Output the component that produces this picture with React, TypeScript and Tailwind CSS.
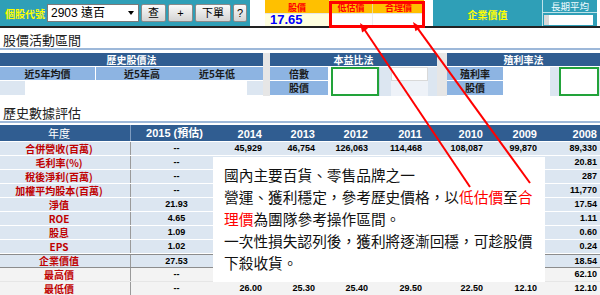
import React from 'react';

const years = ['2014', '2013', '2012', '2011', '2010', '2009', '2008'];
const colW = ['w-[53px]', 'w-[53px]', 'w-[53px]', 'w-[54px]', 'w-[61px]', 'w-[54px]', 'w-[60px]'];

type Row = { label: string; v15: string; vals: string[]; kind?: 'sep' | 'grey' };

const rows: Row[] = [
  { label: '合併營收(百萬)', v15: '--', vals: ['45,929', '46,754', '126,063', '114,468', '108,087', '99,870', '89,330'] },
  { label: '毛利率(%)', v15: '--', vals: ['', '', '', '', '', '', '20.81'] },
  { label: '稅後淨利(百萬)', v15: '--', vals: ['', '', '', '', '', '', '287'] },
  { label: '加權平均股本(百萬)', v15: '--', vals: ['', '', '', '', '', '', '11,770'] },
  { label: '淨值', v15: '21.93', vals: ['', '', '', '', '', '', '17.54'] },
  { label: 'ROE', v15: '4.65', vals: ['', '', '', '', '', '', '1.11'] },
  { label: '股息', v15: '1.09', vals: ['', '', '', '', '', '', '0.60'] },
  { label: 'EPS', v15: '1.02', vals: ['', '', '', '', '', '', '0.24'] },
  { label: '企業價值', v15: '27.53', vals: ['', '', '', '', '', '', '18.54'], kind: 'sep' },
  { label: '最高價', v15: '--', vals: ['', '', '', '', '', '', '62.10'], kind: 'grey' },
  { label: '最低價', v15: '--', vals: ['26.00', '25.30', '25.40', '29.50', '22.50', '12.10', '12.10'], kind: 'grey' },
];

function Arrow({ x0, y0, x1, y1 }: { x0: number; y0: number; x1: number; y1: number }) {
  const dx = x0 - x1;
  const dy = y0 - y1;
  const L = Math.hypot(dx, dy);
  const ux = dx / L;
  const uy = dy / L;
  const bx = x0 - 9 * ux;
  const by = y0 - 9 * uy;
  const nx = -uy;
  const ny = ux;
  const pts = `${x0},${y0} ${bx + 3.5 * nx},${by + 3.5 * ny} ${bx - 3.5 * nx},${by - 3.5 * ny}`;
  return (
    <g>
      <line x1={bx + 2 * ux} y1={by + 2 * uy} x2={x1} y2={y1} stroke="#ff0000" strokeWidth={2} />
      <polygon points={pts} fill="#ff0000" />
    </g>
  );
}

function Btn({ children, w }: { children: React.ReactNode; w: string }) {
  return (
    <div
      className={`${w} h-[18px] ml-[2px] flex items-center justify-center rounded-[2px] border border-[#8a8a8a] bg-gradient-to-b from-[#fafafa] to-[#d4d4d4] text-[11px] leading-none text-black`}
    >
      {children}
    </div>
  );
}

export default function App() {
  return (
    <div className="relative w-[600px] h-[295px] overflow-hidden bg-white font-['Liberation_Sans','Noto_Sans_CJK_TC',sans-serif]">
      {/* Top bar */}
      <div className="flex h-[28px] border-b-2 border-[#222]">
        <div className="w-[250px] bg-[#2f9fb7] flex items-center">
          <span className="ml-[5px] text-[10px] font-bold text-[#ffff00] font-['Noto_Sans_CJK_TC',sans-serif] whitespace-nowrap">
            個股代號
          </span>
          <div className="ml-[2px] w-[92px] h-[18px] bg-white border border-[#7a7a7a] flex items-center">
            <span className="flex-1 pl-[3px] text-[12px] leading-none text-black font-['Liberation_Sans','Noto_Sans_CJK_TC',sans-serif] whitespace-nowrap">
              2903 遠百
            </span>
            <div className="w-[14px] h-full flex items-center justify-center">
              <div className="w-0 h-0 border-l-[3px] border-r-[3px] border-t-[4px] border-l-transparent border-r-transparent border-t-black" />
            </div>
          </div>
          <Btn w="w-[25px]">查</Btn>
          <Btn w="w-[25px]">+</Btn>
          <Btn w="w-[36px]">下單</Btn>
          <Btn w="w-[14px]">?</Btn>
        </div>
        <div className="w-[15px]" />
        <div className="w-[159px] flex flex-col">
          <div className="h-[13px] flex bg-[#ffc000] text-[9px] font-bold text-[#ff0000] leading-[10px] font-['Noto_Sans_CJK_TC',sans-serif]">
            <div className="w-[65px] flex items-center justify-center pt-[2px] border-r border-[#e8d9a0]">股價</div>
            <div className="w-[43px] flex items-center justify-center pt-[2px] border-r border-[#e8d9a0]">低估價</div>
            <div className="flex-1 flex items-center justify-center pt-[2px]">合理價</div>
          </div>
          <div className="flex-1 flex border-t border-[#e6e6e6]">
            <div className="w-[65px] bg-[#ffffe0] flex items-center pl-[5px] text-[13px] font-bold text-[#0000ff] leading-[12px] border-r border-[#dddddd]">
              17.65
            </div>
            <div className="w-[43px] bg-white border-r border-[#eeeeee]" />
            <div className="flex-1 bg-white" />
          </div>
        </div>
        <div className="w-[9px]" />
        <div className="w-[109px] bg-[#2f9fb7] flex items-center justify-center pt-[3px]">
          <span className="text-[10px] font-bold text-[#ffff00] font-['Noto_Sans_CJK_TC',sans-serif]">企業價值</span>
        </div>
        <div className="w-[55px] bg-[#2f9fb7] flex flex-col border-l border-[#bfe3ea]">
          <div className="h-[13px] flex items-center justify-center border-b border-[#bfe3ea] text-[9.5px] leading-[11px] text-[#f0fbff] font-['Noto_Sans_CJK_TC',sans-serif]">
            長期平均
          </div>
          <div className="flex-1 flex items-center pl-[1px] pr-[4px]">
            <div className="w-full h-[10px] bg-white border-l-[5px] border-[#d9d9d9]" />
          </div>
        </div>
        <div className="flex-1" />
      </div>

      {/* 股價活動區間 */}
      <div className="h-[20px] pt-[3px] pl-[3px] text-[13px] leading-[17px] text-[#222] font-['Noto_Sans_CJK_TC',sans-serif]">
        股價活動區間
      </div>
      <div className="h-[2px] bg-[#9db8d9]" />
      <div className="mt-[3px] h-[43px] flex text-[10px] font-bold leading-none font-['Noto_Sans_CJK_TC',sans-serif]">
        <div className="w-[263px] flex flex-col">
          <div className="h-[14px] bg-[#305d91] border-b border-white text-white flex items-center justify-center">歷史股價法</div>
          <div className="h-[14px] bg-[#8db4e2] border-b border-white flex items-center text-[#1a1a1a]">
            <div className="w-[96px] h-full flex items-center justify-center border-r border-white">近5年均價</div>
            <div className="w-[92px] flex items-center justify-center">近5年高</div>
            <div className="w-[58px] flex items-center justify-center">近5年低</div>
            <div className="flex-1" />
          </div>
          <div className="h-[14px] flex">
            <div className="w-[25px] bg-[#dce6f1]" />
            <div className="w-[222px] bg-white" />
            <div className="flex-1 bg-[#dce6f1]" />
          </div>
        </div>
        <div className="w-[7px] bg-[#e6e6e6]" />
        <div className="w-[167px] flex flex-col">
          <div className="h-[14px] bg-[#305d91] border-b border-white text-white flex items-center justify-center">本益比法</div>
          <div className="flex-1 flex">
            <div className="w-[58px] flex flex-col text-[#1a1a1a]">
              <div className="h-[14px] bg-[#8db4e2] border-b border-white flex items-center justify-center">倍數</div>
              <div className="h-[14px] bg-[#8db4e2] flex items-center justify-center">股價</div>
            </div>
            <div className="w-[3px]" />
            <div className="w-[48px] h-[29px] border-2 border-[#22a33a] bg-white" />
            <div className="w-[12px] bg-[#dce6f1] border-l border-[#c4d3e6]" />
            <div className="w-[37px] flex flex-col">
              <div className="h-[14px] bg-white border border-[#d9d9d9]" />
              <div className="flex-1 bg-[#eef2f8]" />
            </div>
            <div className="flex-1 bg-[#dce6f1]" />
          </div>
        </div>
        <div className="w-[10px] bg-[#e6e6e6]" />
        <div className="w-[153px] flex flex-col">
          <div className="h-[14px] bg-[#305d91] border-b border-white text-white flex items-center justify-center">殖利率法</div>
          <div className="flex-1 flex">
            <div className="w-[56px] flex flex-col text-[#1a1a1a]">
              <div className="h-[14px] bg-[#8db4e2] border-b border-white flex items-center justify-center">殖利率</div>
              <div className="h-[14px] bg-[#8db4e2] flex items-center justify-center">股價</div>
            </div>
            <div className="w-[47px] bg-white" />
            <div className="w-[9px] bg-[#dce6f1]" />
            <div className="w-[40px] h-[29px] border-2 border-[#22a33a] bg-white" />
            <div className="flex-1 bg-[#dce6f1]" />
          </div>
        </div>
      </div>

      {/* 歷史數據評估 */}
      <div className="h-[25px] pt-[9px] pl-[3px] text-[13px] leading-[16px] text-[#222] font-['Noto_Sans_CJK_TC',sans-serif]">
        歷史數據評估
      </div>
      <div className="h-[2px] bg-[#9db8d9]" />
      <div className="mt-[2px] h-[17px] flex bg-[#305d91] border-b border-white text-white text-[11px] font-bold leading-none">
        <div className="w-[131px] flex items-center justify-center pr-[12px] border-r border-[#7f9cc0] font-normal font-['Noto_Sans_CJK_TC',sans-serif]">
          年度
        </div>
        <div className="w-[81px] flex items-center justify-center pl-[6px] whitespace-nowrap font-['Liberation_Sans','Noto_Sans_CJK_TC',sans-serif]">
          2015 (預估)
        </div>
        {years.map((y, i) => (
          <div key={y} className={`${colW[i]} flex items-center justify-end pr-[3px] pt-[2px]`}>
            {y}
          </div>
        ))}
      </div>
      {rows.map((r) => (
        <div
          key={r.label}
          className={`h-[14px] flex border-b ${
            r.kind === 'grey' ? 'bg-[#f3f3f3] border-[#e6e6e6]' : 'bg-[#dce6f1] border-white'
          } ${r.kind === 'sep' ? 'border-t border-t-[#8c8c8c] border-b-[#8c8c8c]' : ''}`}
        >
          <div className="w-[131px] flex items-center justify-center pr-[12px] border-r border-[#9a9a9a] text-[10px] font-bold text-[#c00000] leading-none whitespace-nowrap font-['Noto_Sans_CJK_TC',sans-serif]">
            {r.label}
          </div>
          <div className="w-[81px] flex items-center justify-center pl-[10px] text-[9px] font-bold text-black leading-none">
            {r.v15}
          </div>
          {r.vals.map((v, i) => (
            <div key={i} className={`${colW[i]} flex items-center justify-end pr-[3px] text-[9px] font-bold text-black leading-none`}>
              {v}
            </div>
          ))}
        </div>
      ))}

      {/* Red box over 低估價/合理價 */}
      <div className="absolute left-[329px] top-[1px] w-[96px] h-[27px] border-[3px] border-[#ff0000]" />

      {/* Callout */}
      <div className="absolute left-[213px] top-[157px] w-[332px] h-[125px] bg-white pt-[7px] pl-[11px] text-[14.7px] leading-[22px] text-[#111] font-['Noto_Sans_CJK_TC',sans-serif] whitespace-nowrap">
        <div>國內主要百貨、零售品牌之一</div>
        <div>
          營運、獲利穩定，參考歷史價格，以<span className="text-[#ff0000]">低估價</span>至<span className="text-[#ff0000]">合</span>
        </div>
        <div>
          <span className="text-[#ff0000]">理價</span>為團隊參考操作區間。
        </div>
        <div>一次性損失認列後，獲利將逐漸回穩，可趁股價</div>
        <div>下殺收貨。</div>
      </div>

      {/* Arrows */}
      <svg className="absolute left-0 top-0 pointer-events-none" width={600} height={295} viewBox="0 0 600 295">
        <Arrow x0={360} y0={23} x1={470} y1={187} />
        <Arrow x0={413} y0={22} x1={530} y1={183} />
      </svg>
    </div>
  );
}
